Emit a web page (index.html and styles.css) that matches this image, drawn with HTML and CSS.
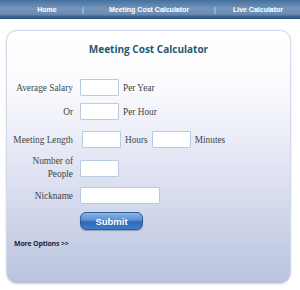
FILE: index.html
```html
<!DOCTYPE html>
<html>
<head>
<meta charset="utf-8">
<link rel="stylesheet" href="styles.css">
</head>
<body>
<nav class="nav">
  <a class="nav-item nav-home">Home</a>
  <span class="sep">|</span>
  <a class="nav-item nav-mid">Meeting Cost Calculator</a>
  <span class="sep">|</span>
  <a class="nav-item nav-live">Live Calculator</a>
</nav>
<main class="card">
  <h1 class="title">Meeting Cost Calculator</h1>
  <form class="form">
    <div class="row r1">
      <label class="lbl">Average Salary</label>
      <div class="fields"><input class="inp"><span class="unit">Per Year</span></div>
    </div>
    <div class="row r2">
      <label class="lbl">Or</label>
      <div class="fields"><input class="inp"><span class="unit">Per Hour</span></div>
    </div>
    <div class="row r3">
      <label class="lbl">Meeting Length</label>
      <div class="fields shift"><input class="inp"><span class="unit">Hours</span><input class="inp"><span class="unit">Minutes</span></div>
    </div>
    <div class="row r4">
      <label class="lbl two">Number of<br>People</label>
      <div class="fields"><input class="inp"></div>
    </div>
    <div class="row r5">
      <label class="lbl">Nickname</label>
      <div class="fields"><input class="inp wide"></div>
    </div>
    <div class="row r6">
      <span class="lbl"></span>
      <div class="fields"><button type="button" class="btn">Submit</button></div>
    </div>
  </form>
  <a class="more">More Options &gt;&gt;</a>
</main>
</body>
</html>
```
FILE: styles.css
```css
html, body {
  margin: 0;
  padding: 0;
  background: #ffffff;
  width: 300px;
  height: 290px;
  overflow: hidden;
}
.nav {
  height: 19px;
  box-sizing: border-box;
  display: flex;
  align-items: center;
  background: linear-gradient(#44709e 0%, #7695ba 45%, #6a8bb3 75%, #3a6592 88%, #2a5482 100%);
  font-family: "Liberation Sans", Arial, sans-serif;
  font-size: 7px;
  font-weight: bold;
  color: #ffffff;
  padding-bottom: 1px;
}
.nav-item { color: #fff; text-align: center; white-space: nowrap; }
.nav-home { width: 82px; padding-left: 12px; box-sizing: border-box; }
.nav-mid { width: 130px; }
.nav-live { width: 84px; }
.sep { color: #dfe8f2; font-weight: normal; width: 2px; }
.card {
  margin: 11px 0 0 6px;
  width: 285px;
  height: 254px;
  box-sizing: border-box;
  border: 1px solid #d4d9ea;
  border-radius: 11px;
  background: linear-gradient(#ffffff 0%, #fbfbfe 22%, #e4e7f4 50%, #cfd5ea 75%, #b9c3dd 100%);
  box-shadow: 0 0 2px rgba(200,206,230,0.8);
  position: relative;
}
.title {
  margin: 11px 0 0 0;
  text-align: center;
  font-family: "Open Sans", sans-serif;
  font-size: 10px;
  font-weight: bold;
  color: #1d5a74;
  line-height: 14px;
}
.form {
  margin-top: 23px;
  font-family: "Liberation Serif", "Times New Roman", serif;
  font-size: 9.3px;
  color: #444444;
}
.row {
  display: flex;
  align-items: center;
}
.lbl {
  width: 66px;
  text-align: right;
  line-height: 12px;
  flex: none;
}
.lbl.two { line-height: 13px; }
.fields {
  display: flex;
  align-items: center;
  margin-left: 7px;
}
.fields.shift { margin-left: 9px; }
.inp {
  width: 39px;
  height: 17px;
  box-sizing: border-box;
  border: 1px solid #b9cbe0;
  border-radius: 1px;
  background: #fff;
  margin: 0;
  padding: 0;
  box-shadow: inset 0 0 1px #dce6f1;
}
.inp.wide { width: 80px; }
.unit { margin: 0 4px 0 4px; }
.r2 { margin-top: 7px; }
.r3 { margin-top: 11px; }
.r4 { margin-top: 7px; }
.r5 { margin-top: 6px; }
.r6 { margin-top: 8px; }
.btn {
  width: 63px;
  height: 18px;
  border: 1px solid #2a5f9a;
  border-radius: 6px;
  background: linear-gradient(#8fb4e2 0%, #5a8fd0 45%, #2e6bb8 55%, #3f7cc6 100%);
  color: #ffffff;
  font-family: "Liberation Sans", Arial, sans-serif;
  font-weight: bold;
  font-size: 9.5px;
  padding: 0;
  box-shadow: 0 1px 1px rgba(60,80,120,0.4);
}
.more {
  display: block;
  margin: 9px 0 0 7px;
  font-family: "Open Sans", sans-serif;
  font-size: 7px;
  font-weight: bold;
  color: #1b2540;
  letter-spacing: -0.2px;
}
```
